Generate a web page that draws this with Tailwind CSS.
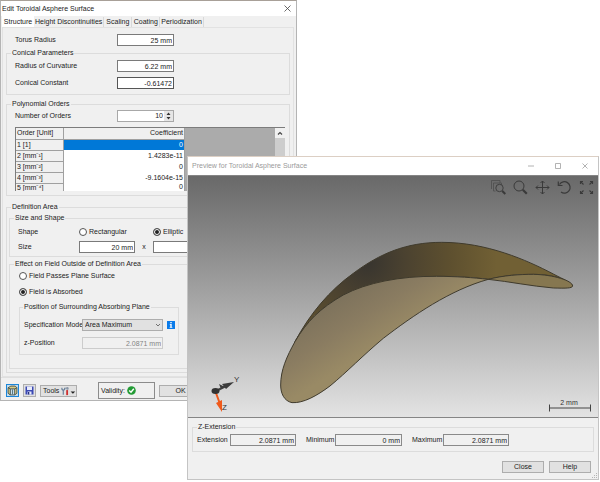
<!DOCTYPE html>
<html lang="en">
<head>
  <meta charset="UTF-8">
  <title>Edit Toroidal Asphere Surface</title>
  <script src="https://cdn.jsdelivr.net/npm/@tailwindcss/browser@4"></script>
</head>
<body class="relative min-h-screen overflow-hidden bg-white font-['Liberation_Sans_Narrow','Liberation_Sans',sans-serif] text-[7px] leading-[8px] text-[#222]">

  <!-- Edit dialog -->
  <div class="absolute top-0 left-0 w-[297px] border border-[#b4b4b4] border-t-[#a8a098] bg-[#f0f0f0]">
    <header class="flex h-[15px] items-center justify-between bg-white pl-px pr-[5px]">
      <h1 class="font-['Liberation_Sans',sans-serif] text-[7px]">Edit Toroidal Asphere Surface</h1>
      <button type="button" aria-label="Close window">
        <svg class="size-[7px]" viewBox="0 0 7 7" fill="none" stroke="#444" stroke-width=".8"><path d="M.5.5l6 6M6.500.5l-6 6"/></svg>
      </button>
    </header>

    <nav class="flex h-[11px] items-end pl-px whitespace-nowrap">
      <button type="button" class="h-[11px] min-w-[32px] bg-white px-px">Structure</button>
      <button type="button" class="h-[10px] min-w-[63px] border-r border-[#d9d9d9] px-px">Height Discontinuities</button>
      <button type="button" class="h-[10px] min-w-[28px] border-r border-[#d9d9d9] px-px">Scaling</button>
      <button type="button" class="h-[10px] min-w-[28px] border-r border-[#d9d9d9] px-px">Coating</button>
      <button type="button" class="h-[10px] min-w-[40px] border-r border-[#d9d9d9] px-px">Periodization</button>
    </nav>

    <main class="ml-px mr-[2px] border border-[#e2e2e2] pt-[6px] pb-[3px] pl-[3px] pr-[3px]">
      <div class="flex h-[12px] items-center pl-[9px]">
        <label for="torus" class="w-[102px]">Torus Radius</label>
        <input id="torus" value="25 mm" class="h-[12px] w-[57px] border border-[#7a7a7a] bg-white px-px text-right">
      </div>

      <fieldset class="mt-[3px] border border-[#dcdcdc] px-1 pb-[5px]">
        <legend class="px-px">Conical Parameters</legend>
        <div class="flex flex-col gap-[5px] pt-[3px] pl-1">
          <div class="flex items-center">
            <label for="roc" class="w-[102px]">Radius of Curvature</label>
            <input id="roc" value="6.22 mm" class="h-[12px] w-[57px] border border-[#7a7a7a] bg-white px-px text-right">
          </div>
          <div class="flex items-center">
            <label for="conic" class="w-[102px]">Conical Constant</label>
            <input id="conic" value="-0.61472" class="h-[12px] w-[57px] border border-[#555] bg-white px-px text-right">
          </div>
        </div>
      </fieldset>

      <fieldset class="mt-[5px] border border-[#dcdcdc] px-1 pb-1">
        <legend class="px-px">Polynomial Orders</legend>
        <div class="pt-[2px] pl-1">
          <div class="flex items-center">
            <label for="orders" class="w-[102px]">Number of Orders</label>
            <div class="flex h-[12px] w-[57px] border border-[#a8a8a8] bg-white">
              <input id="orders" value="10" class="w-full min-w-0 px-px text-right">
              <button type="button" aria-label="Change number of orders" class="bg-[#e6e6e6] px-px">
                <svg class="h-[10px] w-[7px]" viewBox="0 0 7 10" fill="#333"><path d="M1.500 4L3.500 1.500 5.500 4zM1.500 6h4L3.500 8.500z"/></svg>
              </button>
            </div>
          </div>
          <div class="mt-[5px] flex h-[64px] overflow-hidden border-t border-l border-[#7c7c7c] bg-[#ababab]">
            <table class="w-[169px] shrink-0 table-fixed self-start border-collapse bg-white">
              <thead>
                <tr class="h-[11px] bg-[#f0f0f0]">
                  <th class="w-[47px] border-r border-b border-[#a0a0a0] px-px text-left font-normal">Order [Unit]</th>
                  <th class="border-r border-b border-[#a0a0a0] px-px text-right font-normal">Coefficient</th>
                </tr>
              </thead>
              <tbody>
                <tr class="h-[11px]">
                  <th class="border-r border-b border-[#a0a0a0] bg-[#f0f0f0] px-px text-left font-normal">1 [1]</th>
                  <td class="border-r border-[#a0a0a0] bg-[#0078d7] px-px text-right text-white">0</td>
                </tr>
                <tr class="h-[11px]">
                  <th class="border-r border-b border-[#a0a0a0] bg-[#f0f0f0] px-px text-left font-normal">2 [mm⁻¹]</th>
                  <td class="border-r border-[#a0a0a0] px-px text-right">1.4283e-11</td>
                </tr>
                <tr class="h-[11px]">
                  <th class="border-r border-b border-[#a0a0a0] bg-[#f0f0f0] px-px text-left font-normal">3 [mm⁻²]</th>
                  <td class="border-r border-[#a0a0a0] px-px text-right">0</td>
                </tr>
                <tr class="h-[11px]">
                  <th class="border-r border-b border-[#a0a0a0] bg-[#f0f0f0] px-px text-left font-normal">4 [mm⁻³]</th>
                  <td class="border-r border-[#a0a0a0] px-px text-right">-9.1604e-15</td>
                </tr>
                <tr>
                  <th class="border-r border-[#a0a0a0] bg-[#f0f0f0] px-px text-left font-normal">5 [mm⁻⁴]</th>
                  <td class="border-r border-[#a0a0a0] px-px text-right">0</td>
                </tr>
              </tbody>
            </table>
            <div class="ml-auto w-[10px] bg-[#cdcdcd]">
              <svg class="h-[10px] w-[10px] bg-[#f0f0f0]" viewBox="0 0 10 10" fill="none" stroke="#444" stroke-width="1.200"><path d="M3 6.500L5 4.500l2 2"/></svg>
            </div>
          </div>
        </div>
      </fieldset>

      <fieldset class="mt-[7px] border border-[#dcdcdc] px-[2px] pb-[3px]">
        <legend class="ml-[2px] px-px">Definition Area</legend>
        <fieldset class="mt-[3px] border border-[#dcdcdc] px-1 pb-[3px]">
          <legend class="px-px">Size and Shape</legend>
          <div class="mt-[4px] flex h-[12px] items-center pl-1">
            <span class="w-[61px]">Shape</span>
            <label class="flex w-[74px] items-center gap-[2px]">
              <input type="radio" name="shape" class="size-2 appearance-none rounded-full border border-[#555] bg-white">
              Rectangular
            </label>
            <label class="flex items-center gap-[2px]">
              <input type="radio" name="shape" checked class="size-2 appearance-none rounded-full border border-[#555] bg-[#222] shadow-[inset_0_0_0_1px_white]">
              Elliptic
            </label>
          </div>
          <div class="mt-[3px] flex items-center pl-1">
            <label for="sizex" class="w-[61px]">Size</label>
            <input id="sizex" value="20 mm" class="h-[12px] w-[56px] border border-[#7a7a7a] bg-white px-px text-right">
            <label for="sizey" class="w-[18px] text-center">x</label>
            <input id="sizey" value="" class="h-[12px] w-[56px] border border-[#7a7a7a] bg-white px-px text-right">
          </div>
        </fieldset>

        <fieldset class="mt-[3px] border border-[#dcdcdc] px-1 pb-[13px]">
          <legend class="px-px">Effect on Field Outside of Definition Area</legend>
          <div class="mt-[2px] flex flex-col gap-[4px] pl-[5px]">
            <label class="flex h-[12px] items-center gap-[2px]">
              <input type="radio" name="effect" class="size-2 appearance-none rounded-full border border-[#555] bg-white">
              Field Passes Plane Surface
            </label>
            <label class="flex h-[12px] items-center gap-[2px]">
              <input type="radio" name="effect" checked class="size-2 appearance-none rounded-full border border-[#555] bg-[#222] shadow-[inset_0_0_0_1px_white]">
              Field is Absorbed
            </label>
          </div>
          <fieldset class="mt-[5px] ml-[5px] w-[160px] border border-[#dcdcdc] px-[3px] pb-[5px]">
            <legend class="px-px">Position of Surrounding Absorbing Plane</legend>
            <div class="mt-[8px] flex items-center pl-px">
              <label for="mode" class="w-[58px] whitespace-nowrap">Specification Mode</label>
              <div class="relative w-[81px]">
                <select id="mode" class="block h-[12px] w-full appearance-none border border-[#adadad] bg-[#e1e1e1] px-[2px]">
                  <option>Area Maximum</option>
                </select>
                <svg class="pointer-events-none absolute top-[3px] right-[2px] size-[6px]" viewBox="0 0 6 6" fill="none" stroke="#555" stroke-width=".8"><path d="M1 2l2 2 2-2"/></svg>
              </div>
              <button type="button" aria-label="Info" class="ml-1">
                <svg class="size-2" viewBox="0 0 8 8"><path fill="#0a7bea" d="M0 0h8v8H0z"/><path fill="#fff" d="M3.300 1h1.400v1.200H3.300zM2.800 3h1.900v3h.6v.8H2.700V6h.6V3.800h-.5z"/></svg>
              </button>
            </div>
            <div class="mt-[6px] flex items-center pl-px">
              <label for="zpos" class="w-[58px]">z-Position</label>
              <input id="zpos" value="2.0871 mm" disabled class="h-[12px] w-[81px] border border-[#ccc] px-px text-right text-[#838383]">
            </div>
          </fieldset>
        </fieldset>
      </fieldset>
    </main>

    <footer class="flex items-center border-t border-[#dfdfdf] pt-[4px] pb-px pl-[5px]">
      <button type="button" aria-label="Preview" class="flex size-[13px] items-center justify-center border border-[#1a86d9] bg-[#c5dcea]">
        <svg class="size-[11px]" viewBox="0 0 10 10"><path fill="#d9cd86" stroke="#3e4b48" stroke-width=".8" d="M1 2.500L3.500 1h4L9 2.500 7 3.500H3zM1 2.500v5L3 9V3.500M9 2.500v5L7 9V3.500M3 9h4"/><path stroke="#4a6b73" stroke-width=".8" d="M5 4v4.500"/></svg>
      </button>
      <button type="button" aria-label="Save" class="ml-[4px] flex size-[13px] items-center justify-center border border-[#adadad] bg-[#e1e1e1]">
        <svg class="size-[9px]" viewBox="0 0 9 9"><path fill="#3b49b4" d="M.5.5h8v8h-8z"/><path fill="#e8ecfb" d="M2 .5h5v3.500H2zM2.500 5.500h4v3h-4z"/><path fill="#26307c" d="M3 6h1.300v2.500H3z"/></svg>
      </button>
      <button type="button" class="ml-[4px] flex h-[12px] w-[37px] items-center border border-[#adadad] bg-[#e1e1e1] pl-[2px]">
        Tools
        <svg class="ml-[2px] h-[10px] w-[16px]" viewBox="0 0 16 10"><path fill="none" stroke="#69809b" stroke-width="1.300" d="M2.500 9V4.500M1 1.500v1.500l1.500 1.500L4 3V1.500"/><path fill="#8895a6" d="M4.500 1.500l3-.8 1 1-.5 2H6V2.500H4.500z"/><path fill="#ce3030" d="M5.700 4h2v5.500h-2z"/><path fill="#222" d="M10.500 5.500h5L13 8z"/></svg>
      </button>
      <div class="ml-[21px] flex h-[17px] w-[57px] items-center border border-[#8c8c8c] pl-[2px]">
        Validity:
        <svg class="ml-[2px] size-[9px]" viewBox="0 0 9 9"><circle cx="4.500" cy="4.500" r="4.300" fill="#239b35"/><path fill="none" stroke="#fff" stroke-width="1.400" d="M2.200 4.500L4 6.200l2.800-3.400"/></svg>
      </div>
      <button type="button" class="ml-[4px] h-[12px] w-[43px] border border-[#adadad] bg-[#e1e1e1]">OK</button>
      <button type="button" class="ml-[4px] h-[12px] w-[43px] border border-[#adadad] bg-[#e1e1e1]">Cancel</button>
    </footer>
  </div>

  <!-- Preview window -->
  <div class="absolute top-[156px] right-px left-[187px] border border-[#c4c4c4] border-t-[#dccfc4] bg-[#f0f0f0]">
    <header class="flex h-[18px] items-center bg-white pl-[4px] pr-[10px]">
      <h2 class="mr-auto font-['Liberation_Sans',sans-serif] text-[7px] text-[#9a9a9a]">Preview for Toroidal Asphere Surface</h2>
      <div class="flex gap-[21px] text-[#a0a0a0]">
        <button type="button" aria-label="Minimize"><svg class="size-[6px]" viewBox="0 0 6 6" stroke="currentColor" stroke-width=".8"><path d="M0 3h6"/></svg></button>
        <button type="button" aria-label="Maximize"><svg class="size-[6px]" viewBox="0 0 6 6" fill="none" stroke="currentColor" stroke-width=".8"><path d="M.5.5h5v5h-5z"/></svg></button>
        <button type="button" aria-label="Close window"><svg class="size-[6px]" viewBox="0 0 6 6" stroke="currentColor" stroke-width=".8"><path d="M.5.5l5 5M5.500.5l-5 5"/></svg></button>
      </div>
    </header>

    <div class="relative border-y border-[#858585] bg-linear-to-b from-[#696969] to-[#e3e3e3]">
      <svg class="block h-[241px] w-full" viewBox="0 0 410 241" preserveAspectRatio="xMidYMid meet">
        <defs>
          <radialGradient id="dome" gradientUnits="userSpaceOnUse" cx="290" cy="95" r="390">
            <stop offset="0" stop-color="#37342f"/>
            <stop offset=".3" stop-color="#4b4230"/>
            <stop offset=".65" stop-color="#5e502f"/>
            <stop offset="1" stop-color="#716034"/>
          </radialGradient>
          <linearGradient id="sheet" gradientUnits="userSpaceOnUse" x1="220" y1="190" x2="320" y2="350">
            <stop offset="0" stop-color="#7d725c"/>
            <stop offset=".5" stop-color="#8a7c61"/>
            <stop offset="1" stop-color="#998a65"/>
          </linearGradient>
        </defs>
        <!-- asphere surface -->
        <g transform="translate(82 54) scale(.3333)" stroke="#3f3a2c" stroke-width="3" stroke-linejoin="round">
          <path fill="url(#dome)" d="M75 335C120 250 180 180 250 130C330 70 410 37 515 37C650 37 770 90 850 132C880 148 905 158 908 168C890 150 860 134 790 133C740 132 700 138 655 148C610 142 560 139 500 139C380 142 290 162 220 195C150 235 110 275 75 335Z"/>
          <path fill="url(#sheet)" d="M75 335C110 275 150 235 220 195C290 158 390 138 500 139C560 139 610 143 655 148C540 180 430 256 340 325C280 375 230 427 180 468C140 498 100 520 66 518C42 513 32 490 32 465C32 420 50 380 75 335Z"/>
          <path fill="#867750" d="M655 148C700 136 750 133 790 133C850 134 908 152 908 168C906 175 890 175 850 174C780 168 720 155 655 148Z"/>
        </g>
        <!-- axes -->
        <g stroke-linecap="round">
          <path stroke="#444" stroke-width="2" d="M28 215l10-5"/>
          <path fill="#3b3b3b" d="M34 208l12-2-8 7zM31 208l6 3-4 2z"/>
          <path stroke="#f05a1c" stroke-width="2" d="M28 217l4 11"/>
          <path fill="#f05a1c" d="M28 227l6-3 0 12z"/>
          <ellipse cx="27.500" cy="215" rx="4" ry="3" fill="#333"/>
        </g>
        <g class="text-[8px]" fill="#333">
          <text x="46" y="206">Y</text>
          <text x="34" y="234">Z</text>
        </g>
        <!-- scale bar -->
        <path fill="none" stroke="#444" d="M361.500 228.500v7M402.500 228.500v7M361.500 232h41"/>
        <text x="381" y="229" text-anchor="middle" class="font-['Liberation_Sans',sans-serif] text-[7px]" fill="#333">2 mm</text>
      </svg>

      <div class="absolute top-[4px] right-[4px] flex gap-[7px] text-[#3a3a3a]">
        <button type="button" aria-label="Zoom to selection">
          <svg class="size-[15px]" viewBox="0 0 15 15" fill="none" stroke="currentColor"><path stroke="#4e4e4e" stroke-width=".8" d="M4.500 11H2.500V3h8v2M.5 9V.5H9V3"/><circle cx="8.500" cy="8" r="3.700" stroke-width=".9"/><path stroke-width="2" d="M11.300 11l3 3"/></svg>
        </button>
        <button type="button" aria-label="Zoom">
          <svg class="size-[15px]" viewBox="0 0 15 15" fill="none" stroke="currentColor"><circle cx="6" cy="6" r="5" stroke-width="1"/><path stroke-width="2.200" d="M9.800 9.800l4 4"/></svg>
        </button>
        <button type="button" aria-label="Pan">
          <svg class="size-[15px]" viewBox="0 0 15 15" fill="none" stroke="currentColor" stroke-width="1"><path d="M7.500 1v13M1 7.500h13M5.500 3l2-2 2 2M5.500 12l2 2 2-2M3 5.500l-2 2 2 2M12 5.500l2 2-2 2"/></svg>
        </button>
        <button type="button" aria-label="Rotate">
          <svg class="size-[15px]" viewBox="0 0 15 15" fill="none" stroke="currentColor" stroke-width="1.200"><path d="M2.500 4.500A5.700 5.700 0 1 1 4 12M1.300 1.500v4h4.200"/></svg>
        </button>
        <button type="button" aria-label="Fit view">
          <svg class="size-[15px]" viewBox="0 0 15 15" fill="none" stroke="currentColor" stroke-width="1.100"><path d="M1.500 4V1.500H4M1.500 1.500l3 3M11 1.500h2.500V4M13.500 1.500l-3 3M1.500 11v2.500H4M1.500 13.500l3-3M11 13.500h2.500V11M13.500 13.500l-3-3"/></svg>
        </button>
      </div>
    </div>

    <fieldset class="mx-[4px] mt-[5px] flex border border-[#dcdcdc] px-1 pb-[5px]">
      <legend class="px-px">Z-Extension</legend>
      <div class="flex items-center pt-[3px]">
        <label for="ext" class="w-[33px]">Extension</label>
        <input id="ext" readonly value="2.0871 mm" class="h-[12px] w-[66px] border border-[#8a8a8a] px-px text-right">
        <label for="min" class="ml-[10px] w-[29px]">Minimum</label>
        <input id="min" readonly value="0 mm" class="h-[12px] w-[67px] border border-[#8a8a8a] px-px text-right">
        <label for="max" class="ml-[10px] w-[31px]">Maximum</label>
        <input id="max" readonly value="2.0871 mm" class="h-[12px] w-[66px] border border-[#8a8a8a] px-px text-right">
      </div>
    </fieldset>

    <footer class="mt-[9px] flex justify-end gap-[5px] pr-[7px] pb-[6px]">
      <button type="button" class="h-[12px] w-[42px] border border-[#adadad] bg-[#e1e1e1]">Close</button>
      <button type="button" class="h-[12px] w-[42px] border border-[#adadad] bg-[#e1e1e1]">Help</button>
    </footer>
    <svg class="absolute right-0 bottom-0 size-[6px]" viewBox="0 0 6 6" fill="#b5b5b5"><path d="M4 0h1v1H4zM4 2h1v1H4zM4 4h1v1H4zM2 2h1v1H2zM2 4h1v1H2zM0 4h1v1H0z"/></svg>
  </div>

</body>
</html>
